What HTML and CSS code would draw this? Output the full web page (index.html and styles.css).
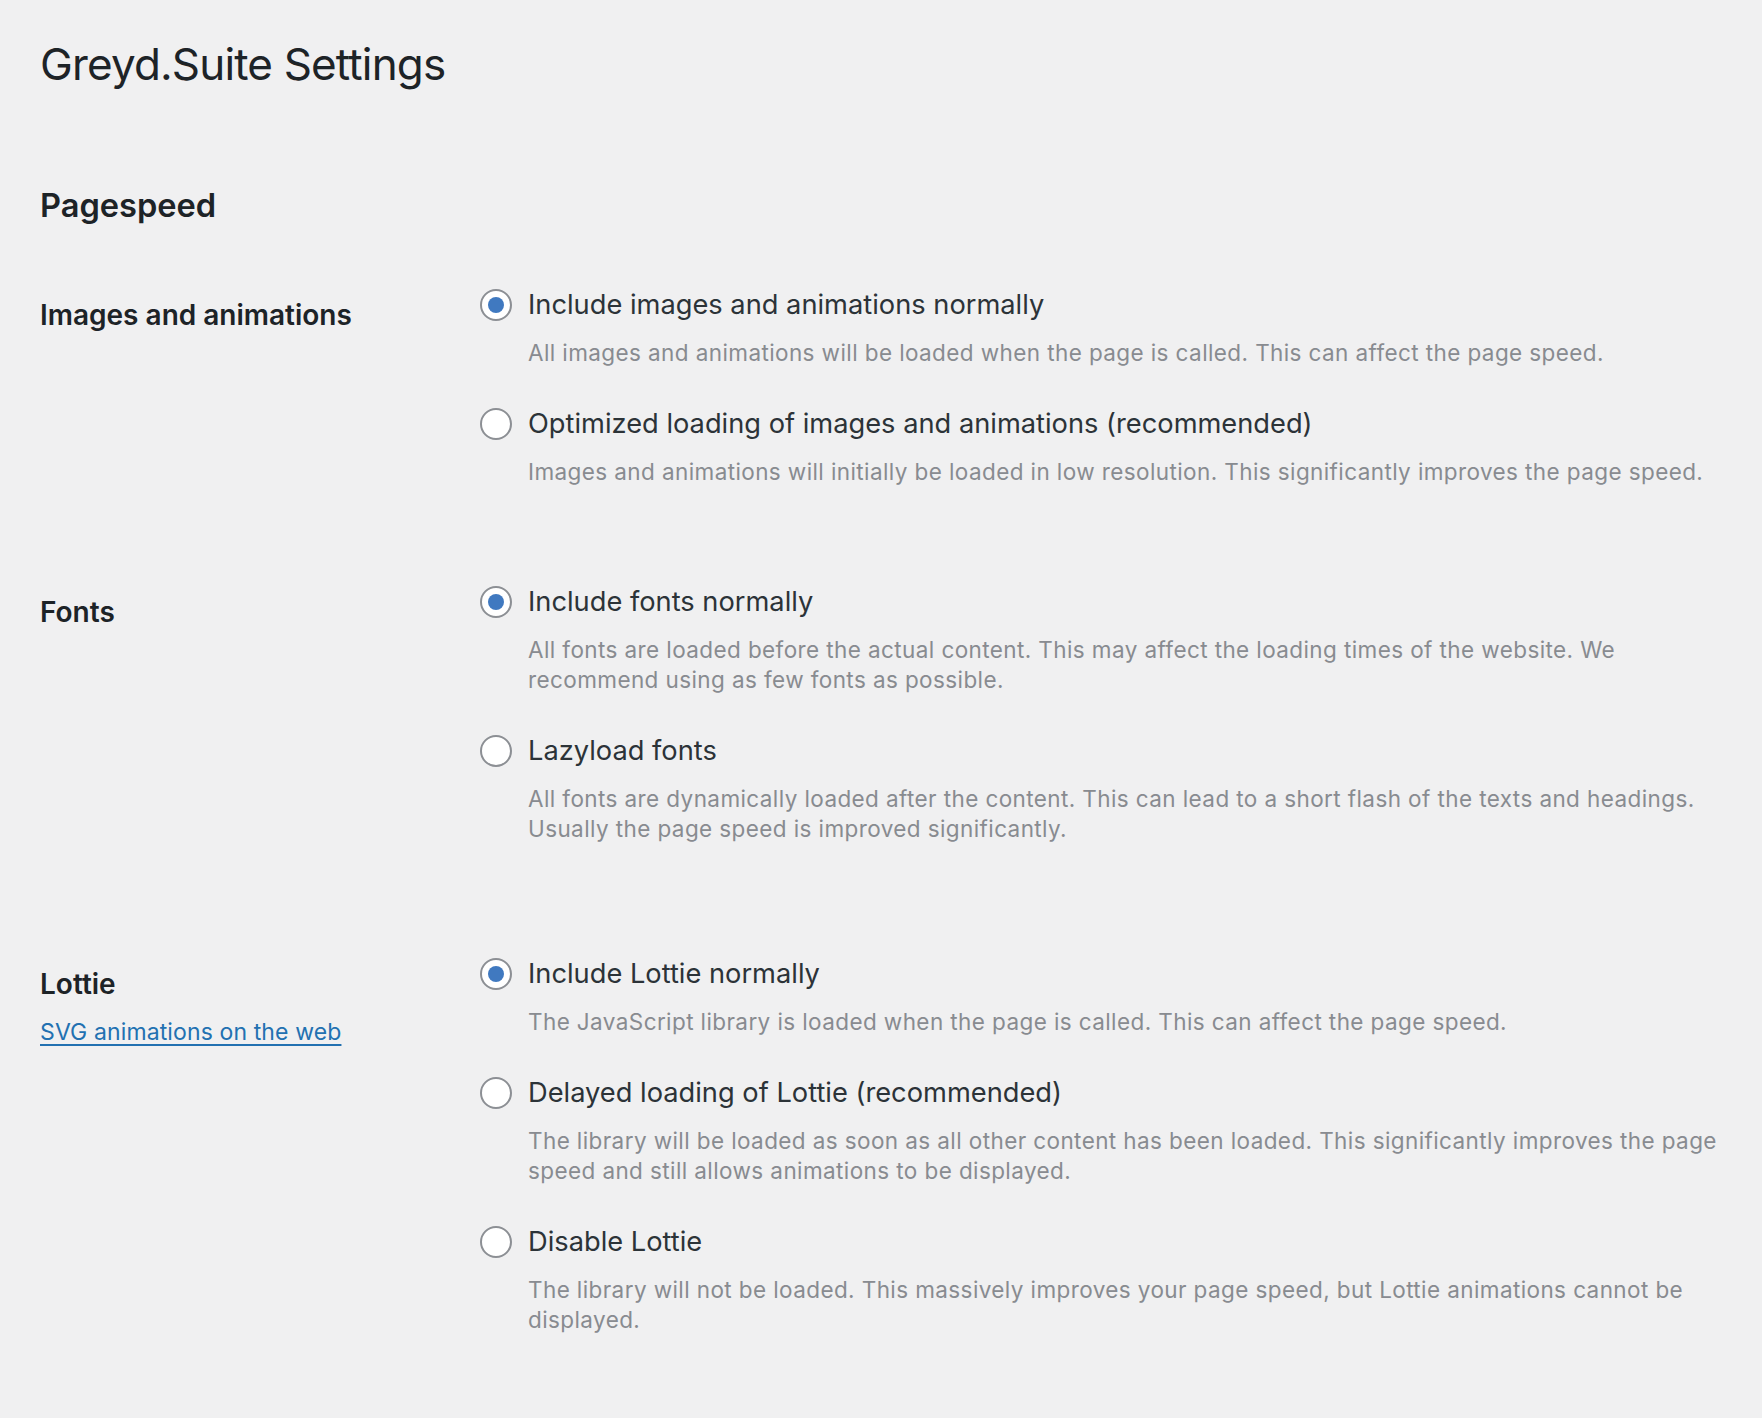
FILE: index.html
```html
<!DOCTYPE html>
<html lang="en">
<head>
<meta charset="utf-8">
<title>Greyd.Suite Settings</title>
<link rel="stylesheet" href="styles.css">
</head>
<body>
<div class="wrap">
  <h1 class="page-title">Greyd.Suite Settings</h1>
  <h2 class="section-title">Pagespeed</h2>

  <div class="setting-row row-images">
    <div class="setting-label">Images and animations</div>
    <fieldset class="options">
      <div class="option">
        <label class="option-label"><input type="radio" class="radio" name="images" checked> Include images and animations normally</label>
        <p class="desc">All images and animations will be loaded when the page is called. This can affect the page speed.</p>
      </div>
      <div class="option">
        <label class="option-label"><input type="radio" class="radio" name="images"> Optimized loading of images and animations (recommended)</label>
        <p class="desc">Images and animations will initially be loaded in low resolution. This significantly improves the page speed.</p>
      </div>
    </fieldset>
  </div>

  <div class="setting-row row-fonts">
    <div class="setting-label">Fonts</div>
    <fieldset class="options">
      <div class="option">
        <label class="option-label"><input type="radio" class="radio" name="fonts" checked> Include fonts normally</label>
        <p class="desc">All fonts are loaded before the actual content. This may affect the loading times of the website. We recommend using as few fonts as possible.</p>
      </div>
      <div class="option">
        <label class="option-label"><input type="radio" class="radio" name="fonts"> Lazyload fonts</label>
        <p class="desc">All fonts are dynamically loaded after the content. This can lead to a short flash of the texts and headings. Usually the page speed is improved significantly.</p>
      </div>
    </fieldset>
  </div>

  <div class="setting-row row-lottie">
    <div class="setting-label">Lottie
      <a class="label-link" href="#">SVG animations on the web</a>
    </div>
    <fieldset class="options">
      <div class="option">
        <label class="option-label"><input type="radio" class="radio" name="lottie" checked> Include Lottie normally</label>
        <p class="desc">The JavaScript library is loaded when the page is called. This can affect the page speed.</p>
      </div>
      <div class="option">
        <label class="option-label"><input type="radio" class="radio" name="lottie"> Delayed loading of Lottie (recommended)</label>
        <p class="desc">The library will be loaded as soon as all other content has been loaded. This significantly improves the page speed and still allows animations to be displayed.</p>
      </div>
      <div class="option">
        <label class="option-label"><input type="radio" class="radio" name="lottie"> Disable Lottie</label>
        <p class="desc">The library will not be loaded. This massively improves your page speed, but Lottie animations cannot be displayed.</p>
      </div>
    </fieldset>
  </div>
</div>
</body>
</html>
```

FILE: styles.css
```css
html, body {
  margin: 0;
  padding: 0;
  background: #f0f0f1;
}

body {
  font-family: "Inter", "Noto Sans", sans-serif;
  color: #1d2327;
  min-height: 1418px;
}

.wrap {
  padding: 0 32px 0 40px;
}

.page-title {
  margin: 38px 0 0;
  font-size: 44px;
  line-height: 52px;
  font-weight: 400;
  letter-spacing: -0.85px;
  color: #1d2327;
}

.section-title {
  margin: 95px 0 0;
  font-size: 32.6px;
  line-height: 40px;
  font-weight: 600;
  color: #1d2327;
}

.setting-row {
  display: grid;
  grid-template-columns: 440px 1fr;
}

.row-images { margin-top: 60px; }
.row-fonts { margin-top: 95px; }
.row-lottie { margin-top: 110px; }

.setting-label {
  padding-top: 10px;
  font-size: 28px;
  line-height: 40px;
  font-weight: 600;
  color: #1d2327;
}

.label-link {
  display: block;
  margin-top: 13px;
  font-size: 23px;
  line-height: 30px;
  font-weight: 400;
  letter-spacing: 0.12px;
  color: #2271b1;
  text-decoration: underline;
  text-underline-offset: 4px;
}

.options {
  margin: 0;
  padding: 0;
  border: 0;
  min-width: 0;
}

.option + .option {
  margin-top: 36px;
}

.option-label {
  display: flex;
  align-items: center;
  gap: 16px;
  font-size: 27.25px;
  line-height: 40px;
  color: #2c3338;
}

.radio {
  appearance: none;
  -webkit-appearance: none;
  margin: 0;
  flex: 0 0 auto;
  width: 32px;
  height: 32px;
  border: 2px solid #8c8f94;
  border-radius: 50%;
  background: #fff;
  display: grid;
  place-items: center;
  box-sizing: border-box;
}

.radio:checked::before {
  content: "";
  width: 16px;
  height: 16px;
  border-radius: 50%;
  background: #4079c0;
}

.desc {
  margin: 13px 0 0 48px;
  font-size: 22.5px;
  line-height: 30px;
  letter-spacing: 0.4px;
  color: #888b90;
}
```
